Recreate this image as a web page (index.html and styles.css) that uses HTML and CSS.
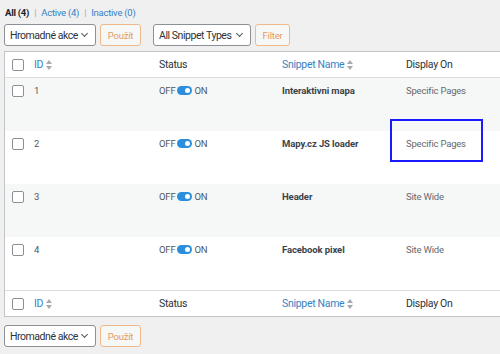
FILE: index.html
```html
<!DOCTYPE html>
<html lang="cs">
<head>
    <meta charset="UTF-8">
    <title>Snippets</title>
    <link rel="stylesheet" href="styles.css">
</head>
<body>
<div class="wrap">
    <ul class="subsubsub">
        <li class="current">All (4)</li>
        <li class="sep">|</li>
        <li><a href="#">Active (4)</a></li>
        <li class="sep">|</li>
        <li><a href="#">Inactive (0)</a></li>
    </ul>

    <div class="tablenav">
        <div class="select">Hromadné akce <span class="chev"></span></div>
        <button class="btn">Použít</button>
        <div class="select types">All Snippet Types <span class="chev"></span></div>
        <button class="btn filter">Filter</button>
    </div>

    <div class="table">
        <div class="row head">
            <div class="cell cb"><span class="box"></span></div>
            <div class="cell col-id"><a href="#">ID</a> <span class="sort"></span></div>
            <div class="cell col-status">Status</div>
            <div class="cell col-name"><a href="#">Snippet Name</a> <span class="sort"></span></div>
            <div class="cell col-display">Display On</div>
        </div>
        <div class="row item alt">
            <div class="cell cb"><span class="box"></span></div>
            <div class="cell col-id">1</div>
            <div class="cell col-status"><span class="toggle">OFF <span class="switch"></span> ON</span></div>
            <div class="cell col-name"><b>Interaktivni mapa</b></div>
            <div class="cell col-display">Specific Pages</div>
        </div>
        <div class="row item">
            <div class="cell cb"><span class="box"></span></div>
            <div class="cell col-id">2</div>
            <div class="cell col-status"><span class="toggle">OFF <span class="switch"></span> ON</span></div>
            <div class="cell col-name"><b>Mapy.cz JS loader</b></div>
            <div class="cell col-display marked">Specific Pages<span class="highlight"></span></div>
        </div>
        <div class="row item alt">
            <div class="cell cb"><span class="box"></span></div>
            <div class="cell col-id">3</div>
            <div class="cell col-status"><span class="toggle">OFF <span class="switch"></span> ON</span></div>
            <div class="cell col-name"><b>Header</b></div>
            <div class="cell col-display">Site Wide</div>
        </div>
        <div class="row item">
            <div class="cell cb"><span class="box"></span></div>
            <div class="cell col-id">4</div>
            <div class="cell col-status"><span class="toggle">OFF <span class="switch"></span> ON</span></div>
            <div class="cell col-name"><b>Facebook pixel</b></div>
            <div class="cell col-display">Site Wide</div>
        </div>
        <div class="row head foot">
            <div class="cell cb"><span class="box"></span></div>
            <div class="cell col-id"><a href="#">ID</a> <span class="sort"></span></div>
            <div class="cell col-status">Status</div>
            <div class="cell col-name"><a href="#">Snippet Name</a> <span class="sort"></span></div>
            <div class="cell col-display">Display On</div>
        </div>
    </div>

    <div class="tablenav bottom">
        <div class="select">Hromadné akce <span class="chev"></span></div>
        <button class="btn">Použít</button>
    </div>
</div>
</body>
</html>
```

FILE: styles.css
```css
body {
    margin: 0;
    background: #f0f0f1;
    font-family: Roboto, "Liberation Sans", sans-serif;
    color: #3c434a;
    overflow: hidden;
}
a {
    color: #3582c4;
    text-decoration: none;
}
.wrap {
    padding: 6px 0 0 4px;
}
.subsubsub {
    list-style: none;
    margin: 0;
    padding: 0 0 0 1px;
    display: flex;
    gap: 5px;
    font-size: 9.5px;
    letter-spacing: -0.25px;
    line-height: 14px;
}
.subsubsub .current {
    font-weight: bold;
    color: #1d2327;
}
.subsubsub .sep { color: #a7aaad; }
.tablenav {
    display: flex;
    align-items: center;
    gap: 4px;
    margin-top: 4px;
    height: 22px;
}
.select {
    height: 22px;
    box-sizing: border-box;
    border: 1px solid #8c8f94;
    border-radius: 3px;
    background: #fff;
    font-size: 10.5px;
    letter-spacing: -0.45px;
    color: #2c3338;
    padding: 0 8px 0 5px;
    display: flex;
    align-items: center;
    justify-content: space-between;
    white-space: nowrap;
    width: 92px;
}
.select.types {
    width: 98px;
    margin-left: 8px;
}
.chev {
    width: 4px;
    height: 4px;
    border-right: 1.3px solid #50575e;
    border-bottom: 1.3px solid #50575e;
    transform: rotate(45deg);
    margin-top: -3px;
}
.btn {
    height: 22px;
    width: 41px;
    border: 1px solid #f0b98c;
    border-radius: 3px;
    background: #f6f7f7;
    color: #e39a66;
    font-family: inherit;
    font-size: 9.5px;
    letter-spacing: -0.2px;
    padding: 0;
}
.btn.filter { width: 35px; }
.table {
    margin-top: 5px;
    border: 1px solid #c3c4c7;
    border-right: none;
    background: #fff;
}
.row {
    display: flex;
    align-items: flex-start;
    height: 53px;
    font-size: 9.5px;
    letter-spacing: -0.2px;
    color: #50575e;
}
.row.alt { background: #f6f7f7; }
.row.head {
    height: 25px;
    align-items: center;
    font-size: 10.5px;
    letter-spacing: -0.3px;
    color: #2c3338;
    border-bottom: 1px solid #dcdcde;
    background: #fff;
}
.row.foot {
    border-bottom: none;
    border-top: 1px solid #dcdcde;
}
.cell {
    box-sizing: border-box;
    padding-left: 8px;
}
.item .cell { padding-top: 7px; }
.item .cb { padding-top: 7px; }
.cb { width: 21px; padding-left: 7px; }
.col-id { width: 125px; display: flex; align-items: center; gap: 3px; }
.col-status { width: 123px; }
.col-name { width: 124px; display: flex; align-items: center; gap: 3px; }
.col-display { flex: 1; }
.item .col-name b { color: #3c434a; font-size: 9.5px; letter-spacing: -0.1px; }
.item .col-display { color: #646970; }
.box {
    display: block;
    width: 10px;
    height: 10px;
    border: 1px solid #8c8f94;
    border-radius: 2px;
    background: #fff;
}
.sort {
    width: 6px;
    height: 10px;
    position: relative;
}
.sort::before, .sort::after {
    content: "";
    position: absolute;
    left: 0;
    border-left: 3px solid transparent;
    border-right: 3px solid transparent;
}
.sort::before { top: 0; border-bottom: 4px solid #a7aaad; }
.sort::after { bottom: 0; border-top: 4px solid #a7aaad; }
.toggle {
    display: flex;
    align-items: center;
    gap: 2px;
    font-size: 9.5px;
    color: #50575e;
}
.switch {
    width: 15px;
    height: 9px;
    border-radius: 5px;
    background: #2b8fde;
    position: relative;
}
.switch::after {
    content: "";
    position: absolute;
    right: 2px;
    top: 2px;
    width: 5px;
    height: 5px;
    border-radius: 50%;
    background: #fff;
}
.marked { position: relative; }
.highlight {
    position: absolute;
    left: -8px;
    top: -12px;
    width: 89px;
    height: 39px;
    border: 2px solid #1a1aff;
}
.tablenav.bottom { margin-top: 8px; }
```
